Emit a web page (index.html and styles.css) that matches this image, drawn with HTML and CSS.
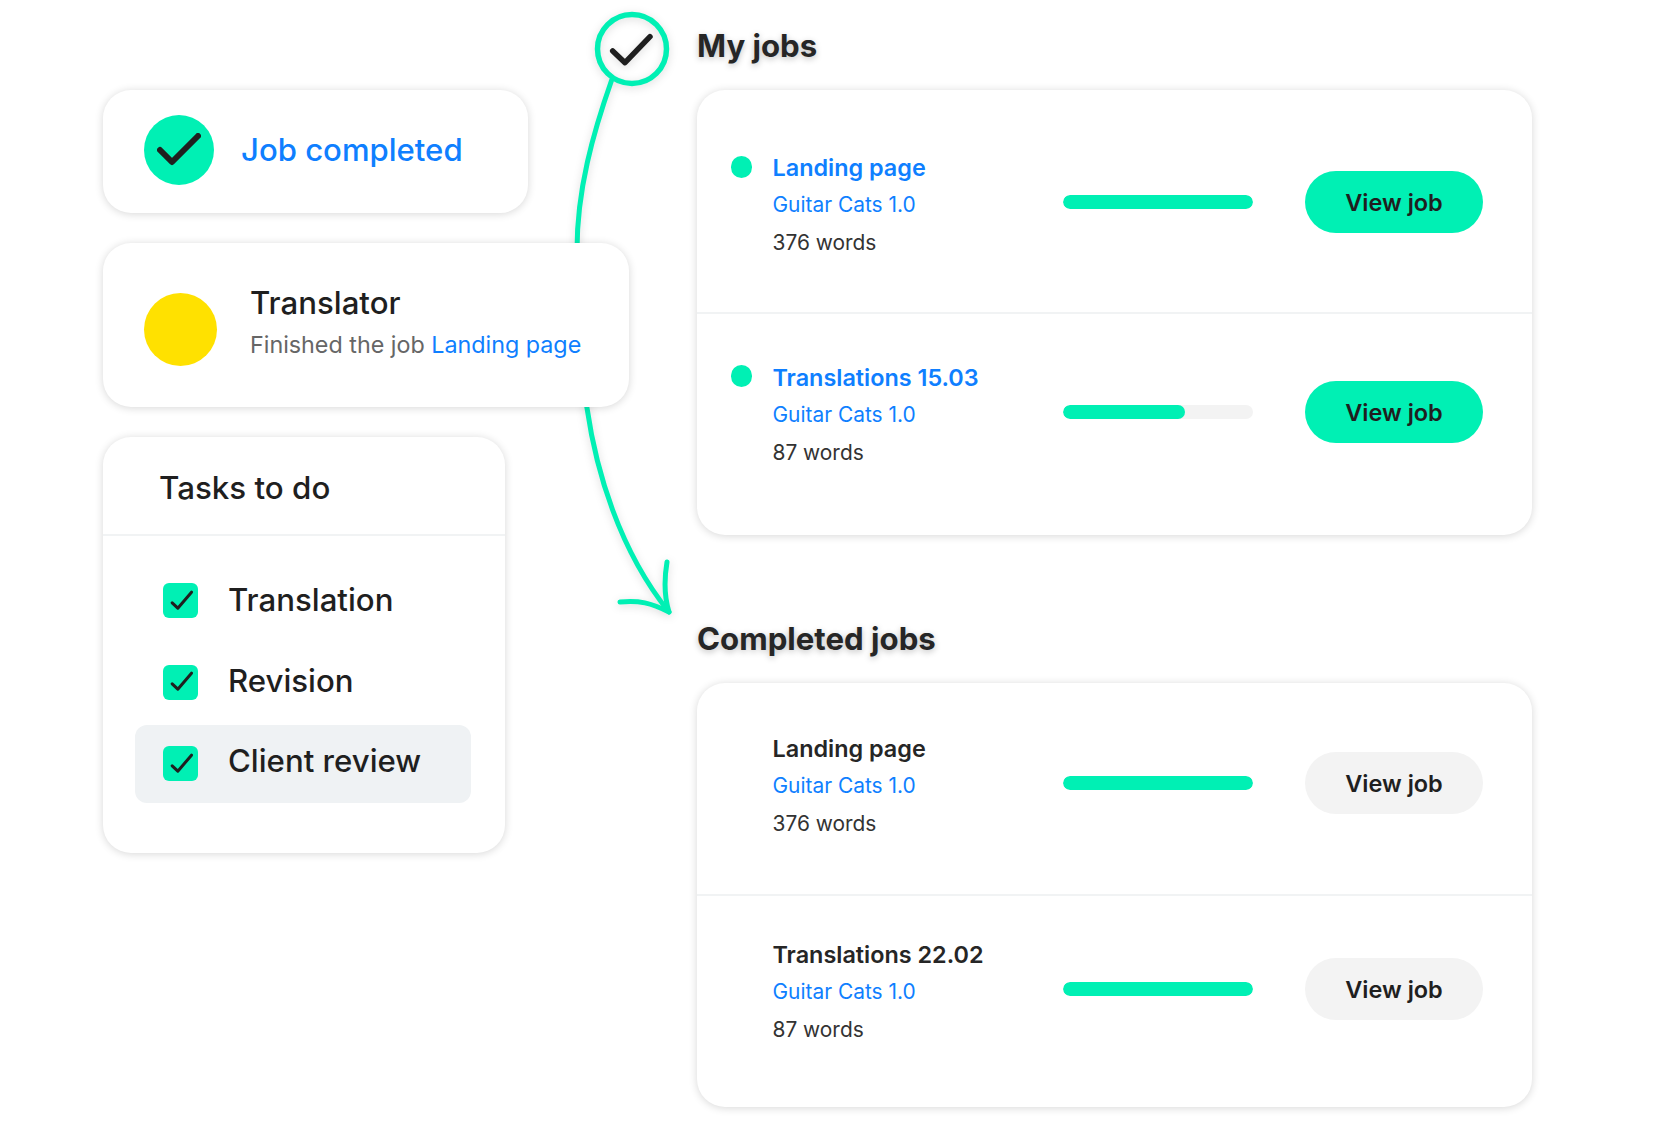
FILE: index.html
```html
<!DOCTYPE html>
<html lang="en">
  <head>
    <meta charset="UTF-8" />
    <title>Jobs</title>
    <link rel="stylesheet" href="styles.css">
  </head>
  <body>
    <div class="page">
      <!-- line from the check mark down to completed jobs -->
      <svg class="flow" width="140" height="630" viewBox="0 0 140 630" fill="none">
        <path class="flow-line" d="M52.7 80 C34 133 18 190 18 250 C18 300 20 360 28 408 C37 470 60 550 110 612" />
        <path class="flow-line" d="M108 562 C105 580 105 596 110 612 C92 603 80 600 61 602" />
        <circle class="flow-ring" cx="73" cy="49" r="34.5" />
        <path class="flow-check" d="M53.7 51 L66 62.7 L91 36.7" />
      </svg>

      <div class="left-col">
        <div class="card notice">
          <div class="round-check">
            <svg width="44" height="34" viewBox="0 0 44 34" fill="none">
              <path d="M3 17 L15 29 L41 3" />
            </svg>
          </div>
          <a class="notice-link" href="#">Job completed</a>
        </div>

        <div class="card person">
          <div class="avatar"></div>
          <div class="person-info">
            <div class="person-name">Translator</div>
            <div class="person-text">Finished the job <a href="#">Landing page</a></div>
          </div>
        </div>

        <div class="card tasks">
          <div class="tasks-head">Tasks to do</div>
          <div class="tasks-list">
            <div class="task">
              <span class="box"><svg width="24" height="24" viewBox="0 0 24 24" fill="none"><path d="M3.2 13.8 L8.8 19.2 L22.5 3.2" /></svg></span>
              Translation
            </div>
            <div class="task">
              <span class="box"><svg width="24" height="24" viewBox="0 0 24 24" fill="none"><path d="M3.2 13.8 L8.8 19.2 L22.5 3.2" /></svg></span>
              Revision
            </div>
            <div class="task task-active">
              <span class="box"><svg width="24" height="24" viewBox="0 0 24 24" fill="none"><path d="M3.2 13.8 L8.8 19.2 L22.5 3.2" /></svg></span>
              Client review
            </div>
          </div>
        </div>
      </div>

      <div class="right-col">
        <h2>My jobs</h2>
        <div class="card jobs jobs-open">
          <div class="job job-a">
            <span class="dot"></span>
            <div class="job-info">
              <a class="job-title" href="#">Landing page</a>
              <a class="job-project" href="#">Guitar Cats 1.0</a>
              <span class="job-words">376 words</span>
            </div>
            <div class="bar"><div class="bar-fill" style="width: 100%"></div></div>
            <a class="btn btn-green" href="#">View job</a>
          </div>
          <div class="job job-b">
            <span class="dot"></span>
            <div class="job-info">
              <a class="job-title" href="#">Translations 15.03</a>
              <a class="job-project" href="#">Guitar Cats 1.0</a>
              <span class="job-words">87 words</span>
            </div>
            <div class="bar"><div class="bar-fill" style="width: 64%"></div></div>
            <a class="btn btn-green" href="#">View job</a>
          </div>
        </div>

        <h2 class="heading-done">Completed jobs</h2>
        <div class="card jobs jobs-done">
          <div class="job job-c">
            <span></span>
            <div class="job-info">
              <span class="job-title">Landing page</span>
              <a class="job-project" href="#">Guitar Cats 1.0</a>
              <span class="job-words">376 words</span>
            </div>
            <div class="bar"><div class="bar-fill" style="width: 100%"></div></div>
            <a class="btn" href="#">View job</a>
          </div>
          <div class="job job-d">
            <span></span>
            <div class="job-info">
              <span class="job-title">Translations 22.02</span>
              <a class="job-project" href="#">Guitar Cats 1.0</a>
              <span class="job-words">87 words</span>
            </div>
            <div class="bar"><div class="bar-fill" style="width: 100%"></div></div>
            <a class="btn" href="#">View job</a>
          </div>
        </div>
      </div>
    </div>
  </body>
</html>
```

FILE: styles.css
```css
body {
  margin: 0;
  background-color: white;
  font-family: "Inter", sans-serif;
  color: #1f1f1f;
}

a {
  color: #0f7fff;
  text-decoration: none;
}

.page {
  position: relative;
  display: flex;
  width: 1659px;
  height: 1128px;
  overflow: hidden;
}

.flow {
  position: absolute;
  left: 559px;
  top: 0;
  filter: drop-shadow(0 2px 4px rgba(0, 0, 0, 0.14));
}

.flow-line {
  stroke: #00f0b4;
  stroke-width: 5;
  stroke-linecap: round;
  stroke-linejoin: round;
}

.flow-ring {
  stroke: #00f0b4;
  stroke-width: 5.5;
}

.flow-check {
  stroke: #1f1f1f;
  stroke-width: 5.5;
  stroke-linecap: round;
  stroke-linejoin: round;
}

.card {
  position: relative;
  background-color: white;
  border-radius: 28px;
  box-shadow: 0 1px 8px rgba(0, 0, 0, 0.16);
}

.left-col {
  display: flex;
  flex-direction: column;
  align-items: flex-start;
  gap: 30px;
  width: 594px;
  padding: 90px 0 0 103px;
}

.notice {
  display: flex;
  align-items: center;
  gap: 27px;
  box-sizing: border-box;
  width: 425px;
  height: 123px;
  padding: 0 0 4px 41px;
}

.round-check {
  display: flex;
  align-items: center;
  justify-content: center;
  width: 70px;
  height: 70px;
  border-radius: 50%;
  background-color: #00f0b4;
}

.round-check path {
  stroke: #1f1f1f;
  stroke-width: 6;
  stroke-linecap: round;
  stroke-linejoin: round;
}

.notice-link {
  font-size: 31.1px;
  font-weight: 500;
}

.person {
  display: flex;
  align-items: center;
  gap: 33px;
  box-sizing: border-box;
  width: 526px;
  height: 164px;
  padding-left: 41px;
}

.avatar {
  width: 73px;
  height: 73px;
  margin-top: 8px;
  border-radius: 50%;
  background-color: #ffe100;
}

.person-info {
  margin-bottom: 8px;
}

.person-name {
  font-size: 31.2px;
  font-weight: 500;
  margin-bottom: 8px;
}

.person-text {
  font-size: 23.3px;
  color: #666;
}

.tasks {
  box-sizing: border-box;
  width: 402px;
  height: 416px;
}

.tasks-head {
  box-sizing: border-box;
  height: 99px;
  padding: 32px 0 0 56px;
  font-size: 31.3px;
  font-weight: 500;
  border-bottom: 2px solid #f1f3f4;
}

.tasks-list {
  display: flex;
  flex-direction: column;
  gap: 3.5px;
  padding: 25.5px 34px 0 32px;
}

.task {
  display: flex;
  align-items: center;
  gap: 30px;
  box-sizing: border-box;
  height: 78px;
  padding: 0 0 2px 28px;
  font-size: 31.2px;
  font-weight: 500;
  border-radius: 12px;
}

.task-active {
  padding-bottom: 5px;
  background-color: #eff2f4;
}

.box {
  display: flex;
  align-items: center;
  justify-content: center;
  width: 35px;
  height: 35px;
  margin-top: 2px;
  border-radius: 6px;
  background-color: #00f0b4;
}

.task-active .box {
  margin-top: 5px;
}

.box path {
  stroke: #1f1f1f;
  stroke-width: 3;
  stroke-linecap: round;
  stroke-linejoin: round;
}

.right-col {
  width: 835px;
}

h2 {
  margin: 26px 0 23px;
  font-size: 31.2px;
  line-height: 41px;
  font-weight: 700;
  color: #262626;
  text-shadow: 0 2px 6px rgba(0, 0, 0, 0.25);
}

.heading-done {
  margin-top: 84px;
}

.jobs {
  box-sizing: border-box;
}

.job {
  display: grid;
  grid-template-columns: 42px 290.5px 242px 178px;
  align-items: start;
  box-sizing: border-box;
  padding-left: 33.5px;
}

.job + .job {
  border-top: 2px solid #f1f3f4;
}

.job-a {
  height: 222px;
  padding-top: 59px;
}

.job-b {
  height: 223px;
  padding-top: 45px;
}

.job-c {
  height: 211px;
  padding-top: 47px;
}

.job-d {
  height: 213px;
  padding-top: 40px;
}

.dot {
  width: 21.5px;
  height: 21.5px;
  margin-top: 7px;
  border-radius: 50%;
  background-color: #00f0b4;
}

.job-b .dot {
  margin-top: 6px;
}

.job-info {
  display: flex;
  flex-direction: column;
  margin-top: -0.5px;
}

.job-info > * {
  line-height: 37.5px;
}

.job-title {
  font-size: 23.4px;
  font-weight: 600;
}

span.job-title {
  color: #262626;
}

.job-project {
  font-size: 20.9px;
}

.job-words {
  font-size: 20.9px;
  color: #333;
}

.bar {
  width: 190px;
  height: 14px;
  margin-top: 46px;
  border-radius: 7px;
  overflow: hidden;
  background-color: #f3f3f3;
}

.bar-fill {
  height: 100%;
  border-radius: 7px;
  background-color: #00f0b4;
}

.btn {
  display: flex;
  align-items: center;
  justify-content: center;
  box-sizing: border-box;
  height: 62px;
  margin-top: 22px;
  padding-top: 1px;
  border-radius: 31px;
  font-size: 23.5px;
  font-weight: 600;
  color: #1f1f1f;
  background-color: #f3f3f3;
}

.btn-green {
  background-color: #00f0b4;
}
```
